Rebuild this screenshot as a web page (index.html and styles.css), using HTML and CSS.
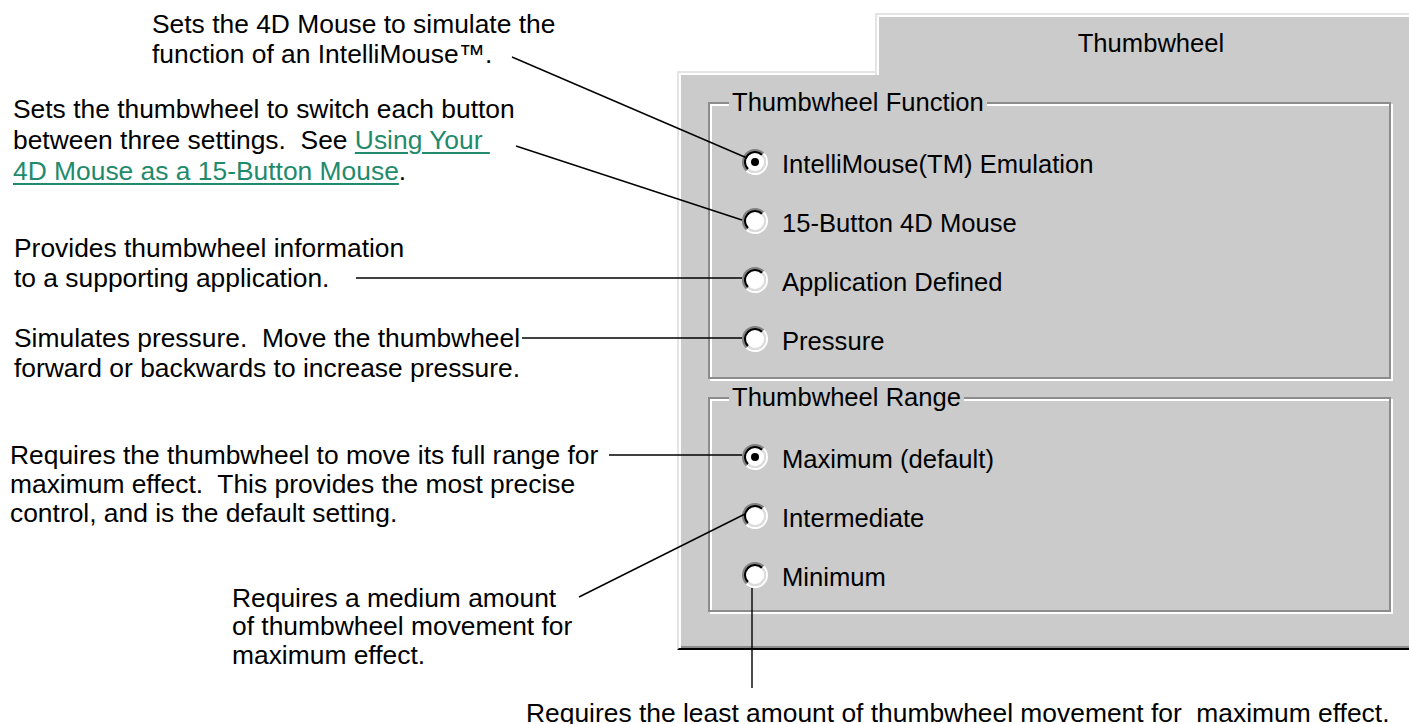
FILE: index.html
```html
<!DOCTYPE html>
<html lang="en">
<head>
<meta charset="utf-8">
<title>Thumbwheel</title>
<link rel="stylesheet" href="styles.css">
</head>
<body>
<div class="page">
  <div class="notes">
    <p class="note note--1">Sets the 4D Mouse to simulate the<br>function of an IntelliMouse™.</p>
    <p class="note note--2">Sets the thumbwheel to switch each button<br>between three settings.&nbsp; See <a class="link" href="#">Using Your&nbsp;<br>4D Mouse as a 15-Button Mouse</a>.</p>
    <p class="note note--3">Provides thumbwheel information<br>to a supporting application.</p>
    <p class="note note--4">Simulates pressure.&nbsp; Move the thumbwheel<br>forward or backwards to increase pressure.</p>
    <p class="note note--5">Requires the thumbwheel to move its full range for<br>maximum effect.&nbsp; This provides the most precise<br>control, and is the default setting.</p>
    <p class="note note--6">Requires a medium amount<br>of thumbwheel movement for<br>maximum effect.</p>
  </div>
  <div class="panel">
    <div class="tab">Thumbwheel</div>
    <div class="dialog">
      <div class="group">
        <div class="legend">Thumbwheel Function</div>
        <div class="option"><span class="radio radio--on"></span><span class="label">IntelliMouse(TM) Emulation</span></div>
        <div class="option"><span class="radio"></span><span class="label">15-Button 4D Mouse</span></div>
        <div class="option"><span class="radio"></span><span class="label">Application Defined</span></div>
        <div class="option"><span class="radio"></span><span class="label">Pressure</span></div>
      </div>
      <div class="group group--range">
        <div class="legend">Thumbwheel Range</div>
        <div class="option"><span class="radio radio--on"></span><span class="label">Maximum (default)</span></div>
        <div class="option"><span class="radio"></span><span class="label">Intermediate</span></div>
        <div class="option"><span class="radio"></span><span class="label">Minimum</span></div>
      </div>
    </div>
  </div>
  <p class="note note--bottom">Requires the least amount of thumbwheel movement for&nbsp; maximum effect.</p>
</div>
<svg class="leaders" width="1409" height="724" viewBox="0 0 1409 724" aria-hidden="true">
  <line x1="512" y1="57" x2="747" y2="158"/>
  <line x1="516" y1="146" x2="742" y2="220"/>
  <line x1="356" y1="278" x2="742" y2="278"/>
  <line x1="522" y1="338" x2="742" y2="338"/>
  <line x1="609" y1="455" x2="742" y2="455"/>
  <line x1="579" y1="597" x2="745" y2="514"/>
  <line x1="752" y1="588" x2="752" y2="688"/>
</svg>
</body>
</html>
```

FILE: styles.css
```css
html, body {
  margin: 0;
  padding: 0;
  overflow: hidden;
  background: #fff;
}

body {
  position: relative;
  width: 1409px;
  height: 724px;
  font-family: "Liberation Sans", Arial, sans-serif;
  color: #000;
}

.page {
  display: grid;
  grid-template-columns: 677px 748px;
  align-items: start;
}

.notes {
  display: flex;
  flex-direction: column;
  align-items: flex-start;
}

.note {
  margin: 0;
  font-size: 26.4px;
  line-height: 30px;
  white-space: nowrap;
}

.note--1 { margin: 9px 0 0 152px; }
.note--2 { margin: 24.5px 0 0 13px; line-height: 31px; }
.note--3 { margin: 46.5px 0 0 14px; }
.note--4 { margin: 30px 0 0 14px; }
.note--5 { margin: 57.5px 0 0 10px; line-height: 29px; }
.note--6 { margin: 56px 0 0 232px; line-height: 28.5px; }

.note--bottom {
  grid-column: 1 / -1;
  margin: 29px 0 0 526px;
}

.link {
  color: #1f8a6c;
  text-decoration: underline;
  text-decoration-thickness: 2px;
  text-underline-offset: 3px;
}

.panel {
  display: flex;
  flex-direction: column;
  padding-top: 13px;
}

.tab {
  position: relative;
  z-index: 1;
  box-sizing: border-box;
  margin-left: 198px;
  margin-bottom: -4px;
  height: 62px;
  padding-top: 13px;
  background: #cbcbcb;
  border-top: 2px solid #e4e4e4;
  border-left: 2px solid #e4e4e4;
  box-shadow: inset 2px 2px 0 #fff;
  text-align: center;
  font-size: 25.6px;
  line-height: 30px;
}

.dialog {
  background: #cbcbcb;
  border: 2px solid;
  border-color: #e4e4e4 #000 #000 #e4e4e4;
  box-shadow: inset 2px 2px 0 #fff, inset -2px -2px 0 #8c8c8c;
  padding: 29px 32px 36px 29px;
}

.group {
  position: relative;
  border: 2px solid #8c8c8c;
  box-shadow: inset 2px 2px 0 #fff, 2px 2px 0 #fff;
  padding: 28px 0 9px 32px;
}

.group--range {
  margin-top: 18px;
  padding-bottom: 6px;
}

.legend {
  position: absolute;
  top: -17px;
  left: 19px;
  padding: 0 3px;
  background: #cbcbcb;
  font-size: 25.6px;
  line-height: 30px;
}

.option {
  display: flex;
  align-items: center;
  gap: 14px;
  height: 59px;
  font-size: 25.6px;
  line-height: 30px;
}

.label {
  margin-top: 5px;
}

.radio {
  position: relative;
  flex: none;
  box-sizing: border-box;
  width: 26px;
  height: 26px;
  border-radius: 50%;
  border: 2px solid;
  border-color: #808080 #fff #fff #808080;
}

.radio::before {
  content: "";
  position: absolute;
  inset: 0;
  border-radius: 50%;
  border: 2px solid;
  border-color: #000 #dcdcdc #dcdcdc #000;
  background: #fff;
}

.radio--on::after {
  content: "";
  position: absolute;
  top: 50%;
  left: 50%;
  width: 8px;
  height: 8px;
  border-radius: 50%;
  background: #000;
  transform: translate(-50%, -50%);
}

.leaders {
  position: absolute;
  top: 0;
  left: 0;
  pointer-events: none;
}

.leaders line {
  stroke: #000;
  stroke-width: 1.4;
}
```
